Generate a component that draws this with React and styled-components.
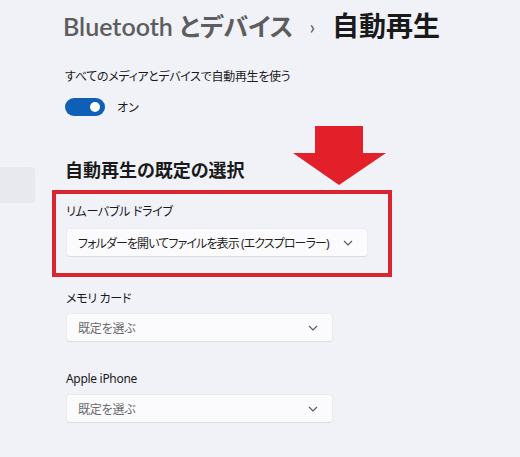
import React from 'react';
import styled, { createGlobalStyle } from 'styled-components';

const GlobalStyle = createGlobalStyle`
  html, body {
    margin: 0;
    padding: 0;
    background: #f1f2f8;
  }
  body {
    font-family: "Noto Sans", "Noto Sans CJK JP", sans-serif;
    font-feature-settings: "palt";
    color: #1b1b1b;
  }
`;

const Page = styled.div`
  position: relative;
  display: grid;
  grid-template-columns: 35px 1fr;
  width: 520px;
  height: 457px;
  overflow: hidden;
`;

const Nav = styled.div`
  padding-top: 167px;
`;

const NavItem = styled.div`
  height: 36px;
  background: #e8e9ef;
  border-radius: 0 4px 4px 0;
`;

const Main = styled.div`
  padding: 6px 0 0 28px;
  display: flex;
  flex-direction: column;
`;

const Breadcrumb = styled.h1`
  margin: 0;
  display: flex;
  align-items: center;
  gap: 10px;
  font-family: "Lato", "Noto Sans CJK JP", sans-serif;
  font-size: 25px;
  line-height: 40px;
  white-space: nowrap;
`;

const Crumb = styled.span`
  color: ${p => (p.$current ? '#1a1a1a' : '#5d5d5d')};
  font-weight: ${p => (p.$current ? 700 : 600)};
  font-size: ${p => (p.$current ? 27 : 25)}px;
`;

const Sep = styled.span`
  font-size: 20px;
  font-weight: 400;
  color: #555;
  margin: 0 7px 0 6px;
`;

const Caption = styled.div`
  margin-top: 22px;
  padding-left: 2px;
  font-size: 12px;
  letter-spacing: -0.3px;
  line-height: 18px;
  color: #1a1a1a;
`;

const ToggleRow = styled.div`
  display: flex;
  align-items: center;
  gap: 12px;
  margin-top: 12px;
  padding-left: 2px;
  font-size: 12px;
`;

const Toggle = styled.span`
  position: relative;
  width: 40px;
  height: 18px;
  border-radius: 9px;
  background: #0d5fb7;
  &::after {
    content: '';
    position: absolute;
    right: 5px;
    top: 4px;
    width: 10px;
    height: 10px;
    border-radius: 50%;
    background: #fff;
  }
`;

const SectionTitle = styled.h2`
  margin: 42px 0 0 2px;
  font-size: 18px;
  font-weight: 700;
  line-height: 24px;
  color: #1a1a1a;
`;

const Highlight = styled.div`
  margin: 8px 0 0 -11px;
  width: 340px;
  box-sizing: border-box;
  border: 4px solid #d7262d;
  padding: 9px 0 16px 10px;
`;

const Field = styled.div`
  margin-top: ${p => p.$gap || 0}px;
  padding-left: 3px;
`;

const Label = styled.div`
  font-size: 12px;
  letter-spacing: -0.3px;
  line-height: 18px;
  color: #1a1a1a;
`;

const Select = styled.div`
  margin-top: ${p => p.$mt}px;
  width: ${p => p.$w}px;
  height: 29px;
  box-sizing: border-box;
  display: flex;
  align-items: center;
  justify-content: space-between;
  padding: 0 14px 0 11px;
  background: #fbfbfd;
  border: 1px solid #ececf0;
  border-bottom-color: #dcdce2;
  border-radius: 4px;
  font-size: 12px;
  letter-spacing: ${p => (p.$tight ? -0.9 : -0.2)}px;
  white-space: nowrap;
  color: ${p => (p.$placeholder ? '#6a6a6a' : '#1f1f1f')};
`;

const Arrow = styled.svg`
  position: absolute;
  left: 293px;
  top: 126px;
`;

const Chevron = () => (
  <svg width="10" height="6" viewBox="0 0 10 6">
    <path d="M1 1l4 4 4-4" fill="none" stroke="#5a5a5a" strokeWidth="1.2" />
  </svg>
);

const Dropdown = ({ value, width, placeholder, tight, mt }) => (
  <Select $w={width} $mt={mt} $tight={tight} $placeholder={placeholder}>
    <span>{value}</span>
    <Chevron />
  </Select>
);

export default function App() {
  return (
    <>
      <GlobalStyle />
      <Page>
        <Nav>
          <NavItem />
        </Nav>
        <Main>
          <Breadcrumb>
            <Crumb>Bluetooth とデバイス</Crumb>
            <Sep>›</Sep>
            <Crumb $current>自動再生</Crumb>
          </Breadcrumb>
          <Caption>すべてのメディアとデバイスで自動再生を使う</Caption>
          <ToggleRow>
            <Toggle />
            <span>オン</span>
          </ToggleRow>
          <SectionTitle>自動再生の既定の選択</SectionTitle>
          <Highlight>
            <Label>リムーバブル ドライブ</Label>
            <Dropdown mt={7} width={302} tight value="フォルダーを開いてファイルを表示 (エクスプローラー)" />
          </Highlight>
          <Field $gap={13}>
            <Label>メモリ カード</Label>
            <Dropdown mt={5} width={267} value="既定を選ぶ" placeholder />
          </Field>
          <Field $gap={28}>
            <Label>Apple iPhone</Label>
            <Dropdown mt={6} width={267} value="既定を選ぶ" placeholder />
          </Field>
        </Main>
        <Arrow width="93" height="60" viewBox="0 0 93 60">
          <polygon points="22,0 70,0 70,27 93,27 46,59 0,27 22,27" fill="#e3202a" />
        </Arrow>
      </Page>
    </>
  );
}
